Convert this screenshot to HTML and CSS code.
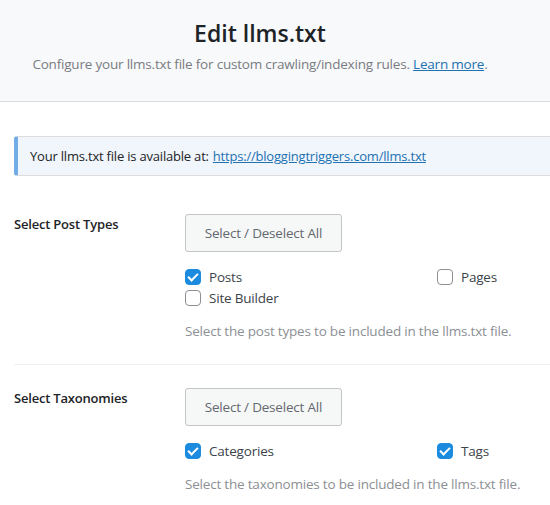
FILE: index.html
```html
<!DOCTYPE html>
<html lang="en">
<head>
  <meta charset="UTF-8">
  <title>Edit llms.txt</title>
  <link rel="stylesheet" href="styles.css">
</head>
<body>

  <div class="page-header">
    <h1>Edit llms.txt</h1>
    <p>Configure your llms.txt file for custom crawling/indexing rules. <a href="#">Learn more</a>.</p>
  </div>

  <div class="content">
    <div class="notice">
      Your llms.txt file is available at: <a href="#">https://bloggingtriggers.com/llms.txt</a>
    </div>

    <!-- Post types -->
    <div class="field-row">
      <div class="field-label">Select Post Types</div>
      <div class="field-body">
        <button type="button" class="btn-toggle">Select / Deselect All</button>
        <div class="check-grid">
          <label class="check"><input type="checkbox" checked><span class="box"></span>Posts</label>
          <label class="check"><input type="checkbox"><span class="box"></span>Pages</label>
          <label class="check"><input type="checkbox"><span class="box"></span>Site Builder</label>
        </div>
        <p class="description">Select the post types to be included in the llms.txt file.</p>
      </div>
    </div>

    <!-- Taxonomies -->
    <div class="field-row">
      <div class="field-label">Select Taxonomies</div>
      <div class="field-body">
        <button type="button" class="btn-toggle">Select / Deselect All</button>
        <div class="check-grid">
          <label class="check"><input type="checkbox" checked><span class="box"></span>Categories</label>
          <label class="check"><input type="checkbox" checked><span class="box"></span>Tags</label>
        </div>
        <p class="description">Select the taxonomies to be included in the llms.txt file.</p>
      </div>
    </div>
  </div>

</body>
</html>
```

FILE: styles.css
```css
body {
  margin: 0;
  font-family: "Open Sans", "Noto Sans", Arial, sans-serif;
  color: #1d2327;
  background: #fff;
  overflow: hidden;
}
a {
  color: #2271b1;
}

.page-header {
  background-color: #f8f9fa;
  border-bottom: 1px solid #dcdcde;
  height: 102px;
  box-sizing: border-box;
  padding: 17px 30px 0 0;
  text-align: center;
}
.page-header h1 {
  margin: 0;
  font-size: 23px;
  font-weight: 600;
  line-height: 32px;
  color: #1d2327;
}
.page-header p {
  margin: 6px 0 0;
  font-size: 13.5px;
  letter-spacing: -0.2px;
  color: #787c82;
}

.content {
  padding: 34px 0 0 14px;
  width: 600px;
}

.notice {
  background-color: #f0f6fc;
  border: 1px solid #dcdcde;
  border-left: 4px solid #72aee6;
  border-radius: 3px;
  height: 40px;
  box-sizing: border-box;
  padding: 0 12px;
  display: flex;
  align-items: center;
  font-size: 13px;
  letter-spacing: -0.2px;
}
.notice a {
  margin-left: 4px;
}

.field-row {
  display: flex;
  padding: 38px 0 24px;
  border-bottom: 1px solid #f0f0f1;
}
.field-row + .field-row {
  padding-top: 23px;
  border-bottom: none;
}
.field-label {
  width: 171px;
  flex-shrink: 0;
  font-size: 13px;
  font-weight: 600;
  padding-top: 1px;
  letter-spacing: -0.2px;
}
.field-body {
  flex: 1;
}

.btn-toggle {
  display: block;
  width: 157px;
  height: 38px;
  background-color: #f6f7f7;
  border: 1px solid #c3c4c7;
  border-radius: 3px;
  font-family: inherit;
  font-size: 13.5px;
  letter-spacing: -0.2px;
  color: #646970;
  cursor: pointer;
}

.check-grid {
  display: grid;
  grid-template-columns: 252px 120px;
  row-gap: 5px;
  margin-top: 17px;
}
.check {
  display: flex;
  align-items: center;
  font-size: 13.5px;
  letter-spacing: -0.2px;
  color: #3c434a;
  line-height: 16px;
  cursor: pointer;
}
.check input {
  display: none;
}
.check .box {
  width: 14px;
  height: 14px;
  border: 1px solid #8c8f94;
  border-radius: 4px;
  margin-right: 8px;
  background: #fff;
  position: relative;
}
.check input:checked + .box {
  background-color: #1b8be0;
  border-color: #1b8be0;
}
.check input:checked + .box::after {
  content: "";
  position: absolute;
  left: 4px;
  top: 1px;
  width: 4px;
  height: 8px;
  border: solid #fff;
  border-width: 0 2.5px 2.5px 0;
  transform: rotate(45deg);
}

.description {
  margin: 16px 0 0;
  font-size: 13.5px;
  letter-spacing: -0.2px;
  color: #8c8f94;
}
```
